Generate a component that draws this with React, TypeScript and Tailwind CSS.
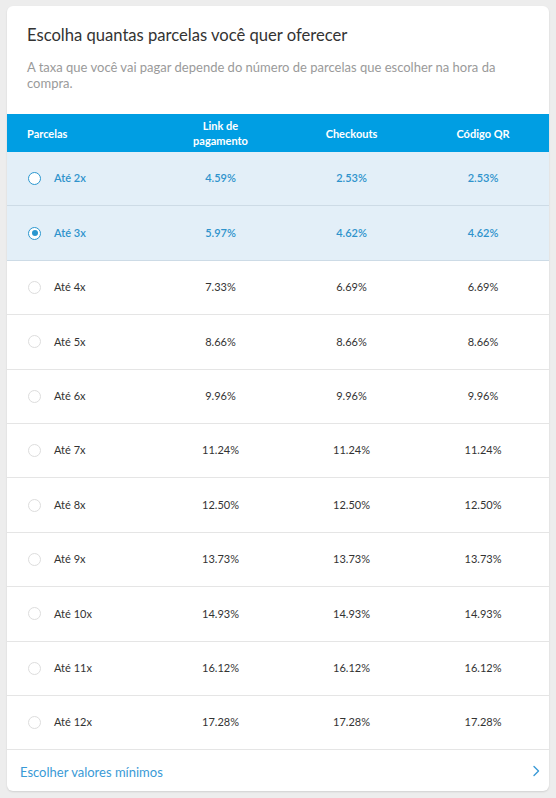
import React from "react";

type Row = { n: number; link: string; checkout: string; qr: string };

const rows: Row[] = [
  { n: 2, link: "4.59%", checkout: "2.53%", qr: "2.53%" },
  { n: 3, link: "5.97%", checkout: "4.62%", qr: "4.62%" },
  { n: 4, link: "7.33%", checkout: "6.69%", qr: "6.69%" },
  { n: 5, link: "8.66%", checkout: "8.66%", qr: "8.66%" },
  { n: 6, link: "9.96%", checkout: "9.96%", qr: "9.96%" },
  { n: 7, link: "11.24%", checkout: "11.24%", qr: "11.24%" },
  { n: 8, link: "12.50%", checkout: "12.50%", qr: "12.50%" },
  { n: 9, link: "13.73%", checkout: "13.73%", qr: "13.73%" },
  { n: 10, link: "14.93%", checkout: "14.93%", qr: "14.93%" },
  { n: 11, link: "16.12%", checkout: "16.12%", qr: "16.12%" },
  { n: 12, link: "17.28%", checkout: "17.28%", qr: "17.28%" },
];

function Radio({ state }: { state: "off" | "active" | "checked" }) {
  if (state === "checked") {
    return (
      <span className="flex h-[13px] w-[13px] items-center justify-center rounded-full border-[1.5px] border-[#2a97cf] bg-white">
        <span className="h-[6px] w-[6px] rounded-full bg-[#2a97cf]" />
      </span>
    );
  }
  if (state === "active") {
    return <span className="block h-[13px] w-[13px] rounded-full border-[1.5px] border-[#2a97cf] bg-white" />;
  }
  return <span className="block h-[13px] w-[13px] rounded-full border border-[#dddddd] bg-white" />;
}

export default function App() {
  const grid = "grid grid-cols-[148px_131px_131px_132px]";
  return (
    <div
      className="min-h-[798px] bg-[#ededed] px-[7px] pt-[6px]"
      style={{ fontFamily: "Lato, 'Open Sans', Arial, sans-serif" }}
    >
      <div className="overflow-hidden rounded-[6px] bg-white shadow-[0_1px_2px_rgba(0,0,0,0.12)]">
        <div className="px-5 pb-[23px] pt-[18px]">
          <h1 className="text-[16.6px] font-normal leading-[22px] text-[#333333]">
            Escolha quantas parcelas você quer oferecer
          </h1>
          <p className="mt-[13px] text-[13px] leading-[16px] text-[#9a9a9a]">
            A taxa que você vai pagar depende do número de parcelas que escolher na hora da compra.
          </p>
        </div>

        <div className={`${grid} h-[38px] items-center bg-[#009ee3] text-[11px] font-bold leading-[15px] text-white`}>
          <div className="pl-5">Parcelas</div>
          <div className="text-center">
            Link de
            <br />
            pagamento
          </div>
          <div className="text-center">Checkouts</div>
          <div className="text-center">Código QR</div>
        </div>

        {rows.map((r) => {
          const selected = r.n <= 3;
          const state = r.n === 3 ? "checked" : r.n === 2 ? "active" : "off";
          return (
            <div
              key={r.n}
              className={`${grid} h-[54.4px] items-center border-b text-[11px] ${
                selected
                  ? "border-[#cddbe6] bg-[#e3eff8] font-semibold text-[#2e93cc]"
                  : "border-[#e5e5e5] bg-white text-[#333333]"
              }`}
            >
              <div className="flex items-center pl-[21px]">
                <Radio state={state} />
                <span className="ml-[13px]">Até {r.n}x</span>
              </div>
              <div className="text-center">{r.link}</div>
              <div className="text-center">{r.checkout}</div>
              <div className="text-center">{r.qr}</div>
            </div>
          );
        })}

        <div className="flex h-[41px] items-center justify-between pl-[13px] pr-[9px] pt-[4px]">
          <span className="text-[13px] text-[#3a9ad6]">Escolher valores mínimos</span>
          <svg width="8" height="12" viewBox="0 0 8 12" fill="none" className="-mt-[4px]">
            <path d="M2 1.5 L6.5 6 L2 10.5" stroke="#3a9ad6" strokeWidth="1.4" strokeLinecap="round" strokeLinejoin="round" />
          </svg>
        </div>
      </div>
    </div>
  );
}
